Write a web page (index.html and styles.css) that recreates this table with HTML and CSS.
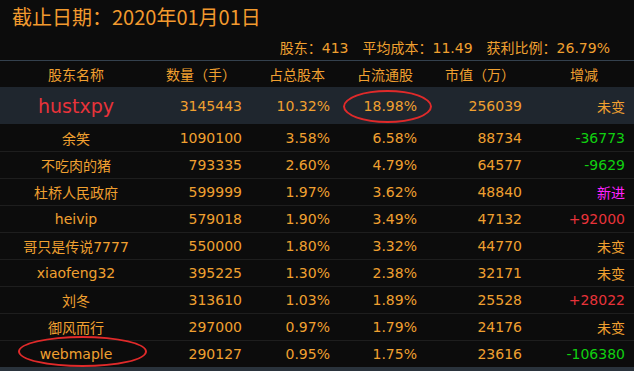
FILE: index.html
```html
<!DOCTYPE html>
<html lang="zh">
<head>
<meta charset="utf-8">
<title>股东</title>
<link rel="stylesheet" href="styles.css">
</head>
<body>
<div class="panel">
  <div class="title">截止日期：2020年01月01日</div>
  <div class="summary">
    <span>股东：413</span>
    <span>平均成本：11.49</span>
    <span>获利比例：26.79%</span>
  </div>
  <div class="table">
    <div class="row head">
      <div class="c name">股东名称</div>
      <div class="c num h1">数量（手）</div>
      <div class="c num h2">占总股本</div>
      <div class="c num h3">占流通股</div>
      <div class="c num h4">市值（万）</div>
      <div class="c num h5">增减</div>
    </div>
    <div class="row hl">
      <div class="c name big">hustxpy</div>
      <div class="c num">3145443</div>
      <div class="c num">10.32%</div>
      <div class="c num mark">18.98%<span class="ring ring1"></span></div>
      <div class="c num">256039</div>
      <div class="c num">未变</div>
    </div>
    <div class="row first">
      <div class="c name">余笑</div>
      <div class="c num">1090100</div>
      <div class="c num">3.58%</div>
      <div class="c num">6.58%</div>
      <div class="c num">88734</div>
      <div class="c num down">-36773</div>
    </div>
    <div class="row">
      <div class="c name">不吃肉的猪</div>
      <div class="c num">793335</div>
      <div class="c num">2.60%</div>
      <div class="c num">4.79%</div>
      <div class="c num">64577</div>
      <div class="c num down">-9629</div>
    </div>
    <div class="row">
      <div class="c name">杜桥人民政府</div>
      <div class="c num">599999</div>
      <div class="c num">1.97%</div>
      <div class="c num">3.62%</div>
      <div class="c num">48840</div>
      <div class="c num new">新进</div>
    </div>
    <div class="row">
      <div class="c name">heivip</div>
      <div class="c num">579018</div>
      <div class="c num">1.90%</div>
      <div class="c num">3.49%</div>
      <div class="c num">47132</div>
      <div class="c num up">+92000</div>
    </div>
    <div class="row">
      <div class="c name">哥只是传说7777</div>
      <div class="c num">550000</div>
      <div class="c num">1.80%</div>
      <div class="c num">3.32%</div>
      <div class="c num">44770</div>
      <div class="c num">未变</div>
    </div>
    <div class="row">
      <div class="c name">xiaofeng32</div>
      <div class="c num">395225</div>
      <div class="c num">1.30%</div>
      <div class="c num">2.38%</div>
      <div class="c num">32171</div>
      <div class="c num">未变</div>
    </div>
    <div class="row">
      <div class="c name">刘冬</div>
      <div class="c num">313610</div>
      <div class="c num">1.03%</div>
      <div class="c num">1.89%</div>
      <div class="c num">25528</div>
      <div class="c num up">+28022</div>
    </div>
    <div class="row">
      <div class="c name">御风而行</div>
      <div class="c num">297000</div>
      <div class="c num">0.97%</div>
      <div class="c num">1.79%</div>
      <div class="c num">24176</div>
      <div class="c num">未变</div>
    </div>
    <div class="row">
      <div class="c name mark">webmaple<span class="ring ring2"></span></div>
      <div class="c num">290127</div>
      <div class="c num">0.95%</div>
      <div class="c num">1.75%</div>
      <div class="c num">23616</div>
      <div class="c num down">-106380</div>
    </div>
  </div>
</div>
</body>
</html>
```

FILE: styles.css
```css
html, body {
  margin: 0;
  padding: 0;
  background: #0c0c0c;
}
body {
  width: 634px;
  height: 371px;
  overflow: hidden;
  font-family: "DejaVu Sans", "Noto Sans CJK SC", sans-serif;
  font-size: 14px;
  color: #f0a030;
}
.panel {
  display: flex;
  flex-direction: column;
}
.title {
  height: 34px;
  line-height: 34px;
  padding-left: 12px;
  font-family: "Noto Sans CJK SC", sans-serif;
  font-size: 20px;
  color: #f29a2e;
}
.summary {
  height: 26px;
  display: flex;
  justify-content: flex-end;
  align-items: center;
  gap: 14px;
  padding-right: 24px;
}
.table {
  border-top: 1px solid #34414e;
  border-bottom: 4px solid #2a333c;
}
.row {
  display: grid;
  grid-template-columns: 152px 90px 88px 87px 105px 103px;
  align-items: center;
  height: 27px;
  box-sizing: border-box;
  border-top: 1px solid #1e1e1e;
}
.row.head {
  height: 26px;
  border-top: none;
}
.row.hl {
  height: 37px;
  border-top: none;
  background: #1f262e;
}
.row.first {
  border-top: none;
}
.c {
  white-space: nowrap;
}
.name {
  text-align: center;
}
.num {
  text-align: right;
}
.h1 { padding-right: 6px; }
.h2 { padding-right: 5px; }
.h3 { padding-right: 4px; }
.h4 { padding-right: 7px; }
.h5 { padding-right: 27px; }
.big {
  font-size: 19px;
  color: #e8333a;
}
.down { color: #10d010; }
.up { color: #e8333a; }
.new { color: #ff22ff; }
.mark {
  position: relative;
}
.ring {
  position: absolute;
  border: 2.5px solid #e02a2a;
  border-radius: 50%;
  box-sizing: border-box;
  pointer-events: none;
}
.ring1 {
  left: 13px;
  top: -8px;
  width: 89px;
  height: 33px;
}
.ring2 {
  left: 18px;
  top: -10px;
  width: 129px;
  height: 31px;
}
```
